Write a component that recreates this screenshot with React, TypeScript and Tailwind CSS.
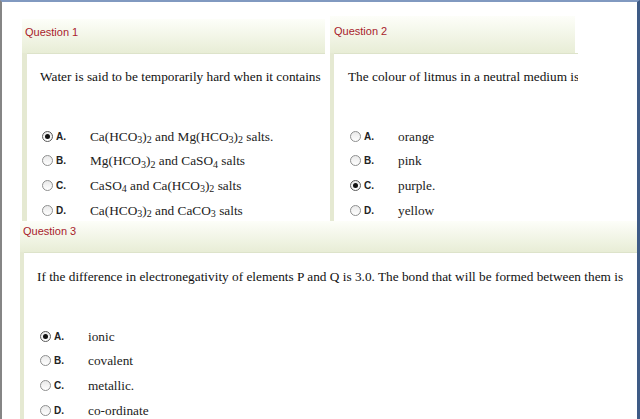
import React from "react";

type Opt = { label: string; text: React.ReactNode; checked?: boolean };

const Sub = ({ children }: { children: React.ReactNode }) => (
  <sub className="text-[10px]">{children}</sub>
);

function Radio({ checked }: { checked?: boolean }) {
  return (
    <span
      className={
        "flex items-center justify-center w-[11px] h-[11px] rounded-full border bg-linear-to-b from-[#e9e9e9] to-white " +
        (checked ? "border-[#5a5a5a]" : "border-[#8e8f8f]")
      }
    >
      {checked ? <span className="w-[5px] h-[5px] rounded-full bg-[#111]" /> : null}
    </span>
  );
}

function Options({ opts, padL }: { opts: Opt[]; padL: string }) {
  return (
    <div className={"mt-[40px] " + padL}>
      {opts.map((o) => (
        <div key={o.label} className="flex items-center h-[24.6px]">
          <Radio checked={o.checked} />
          <span className="ml-[3px] w-[34px] text-[10px] font-bold text-[#222] font-['Liberation_Sans',Arial,sans-serif]">
            {o.label}
          </span>
          <span className="text-[13.3px] leading-[15px] text-[#222] whitespace-nowrap font-['Liberation_Serif','Times_New_Roman',serif]">
            {o.text}
          </span>
        </div>
      ))}
    </div>
  );
}

function Header({ title, cls }: { title: string; cls: string }) {
  return (
    <div
      className={
        "shrink-0 bg-linear-to-b from-[#fdfef9] to-[#e8edd6] text-[11px] leading-[13px] text-[#a81c2c] font-['Liberation_Sans',Arial,sans-serif] " +
        cls
      }
    >
      {title}
    </div>
  );
}

export default function App() {
  const q1: Opt[] = [
    {
      label: "A.",
      checked: true,
      text: (
        <>
          Ca(HCO<Sub>3</Sub>)<Sub>2</Sub> and Mg(HCO<Sub>3</Sub>)<Sub>2</Sub> salts.
        </>
      ),
    },
    {
      label: "B.",
      text: (
        <>
          Mg(HCO<Sub>3</Sub>)<Sub>2</Sub> and CaSO<Sub>4</Sub> salts
        </>
      ),
    },
    {
      label: "C.",
      text: (
        <>
          CaSO<Sub>4</Sub> and Ca(HCO<Sub>3</Sub>)<Sub>2</Sub> salts
        </>
      ),
    },
    {
      label: "D.",
      text: (
        <>
          Ca(HCO<Sub>3</Sub>)<Sub>2</Sub> and CaCO<Sub>3</Sub> salts
        </>
      ),
    },
  ];
  const q2: Opt[] = [
    { label: "A.", text: "orange" },
    { label: "B.", text: "pink" },
    { label: "C.", text: "purple.", checked: true },
    { label: "D.", text: "yellow" },
  ];
  const q3: Opt[] = [
    { label: "A.", text: "ionic", checked: true },
    { label: "B.", text: "covalent" },
    { label: "C.", text: "metallic." },
    { label: "D.", text: "co-ordinate" },
  ];

  const qText =
    "text-[13.3px] leading-[15px] text-[#111] whitespace-nowrap font-['Liberation_Serif','Times_New_Roman',serif]";

  return (
    <div className="w-[640px] h-[419px] overflow-hidden bg-white border-t-2 border-t-[#8199c0] border-l-2 border-l-[#858585] border-r-[3px] border-r-[#3e5b86] flex flex-col">
      {/* top row */}
      <div className="flex h-[219px] shrink-0 overflow-hidden">
        {/* Question 1 */}
        <div className="ml-[20px] mt-[17px] w-[303px] flex flex-col bg-[#e5e9d2] overflow-hidden">
          <Header title="Question 1" cls="h-[34px] pt-[7px] pl-[3px]" />
          <div className="flex-1 ml-[5px] bg-white border-t border-t-[#dde3ca]">
            <p className={qText + " mt-[15px] pl-[13px]"}>
              Water is said to be temporarily hard when it contains
            </p>
            <Options opts={q1} padL="pl-[15px]" />
          </div>
        </div>
        {/* Question 2 */}
        <div className="ml-[5px] mt-[14px] w-[248px] flex flex-col overflow-hidden">
          <Header title="Question 2" cls="w-[245px] h-[37px] pt-[9px] pl-[4px]" />
          <div className="flex-1 flex">
            <div className="w-[4px] bg-[#e5e9d2]" />
            <div className="flex-1 bg-white border-t border-t-[#dde3ca] overflow-hidden">
              <p className={qText + " mt-[15px] pl-[14px]"}>
                The colour of litmus in a neutral medium is
              </p>
              <Options opts={q2} padL="pl-[16px]" />
            </div>
          </div>
        </div>
      </div>
      {/* Question 3 */}
      <div className="ml-[18px] flex-1 flex flex-col bg-[#e5e9d2] overflow-hidden">
        <Header title="Question 3" cls="h-[31px] pt-[4px] pl-[3px]" />
        <div className="flex-1 ml-[4px] bg-white border-t border-t-[#dde3ca]">
          <p className={qText + " mt-[16px] pl-[13px]"}>
            If the difference in electronegativity of elements P and Q is 3.0. The bond that will be formed between them is
          </p>
          <Options opts={q3} padL="pl-[16px]" />
        </div>
      </div>
    </div>
  );
}
